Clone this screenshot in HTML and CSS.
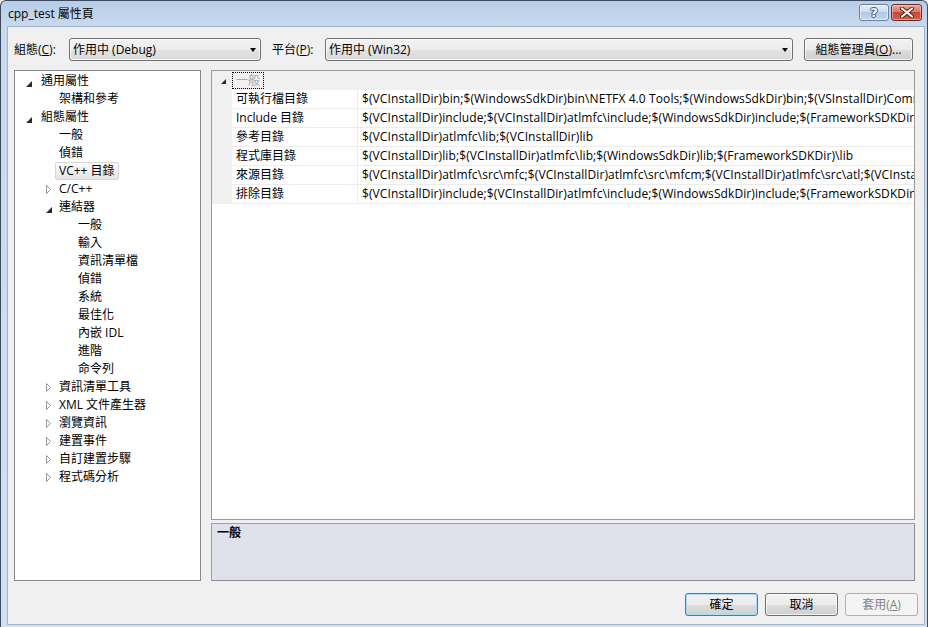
FILE: index.html
```html
<!DOCTYPE html>
<html>
<head>
<meta charset="utf-8">
<title>cpp_test 屬性頁</title>
<link rel="stylesheet" href="styles.css">
</head>
<body>
<div class="window">
  <div class="titlebar">
    <span class="title">cpp_test 屬性頁</span>
    <div class="caps">
      <div class="cap help"><span>?</span></div>
      <div class="cap close">
        <svg width="14" height="11" viewBox="0 0 14 11"><path d="M2 1.5 L12 9.5 M12 1.5 L2 9.5" stroke="#5a1a12" stroke-width="4" stroke-linecap="round"/><path d="M2 1.5 L12 9.5 M12 1.5 L2 9.5" stroke="#fff" stroke-width="2.2" stroke-linecap="round"/></svg>
      </div>
    </div>
  </div>
  <div class="client">
    <div class="toprow">
      <span class="lbl lbl1">組態(<u>C</u>):</span>
      <div class="combo combo1"><span>作用中 (Debug)</span><i class="drop"></i></div>
      <span class="lbl lbl2">平台(<u>P</u>):</span>
      <div class="combo combo2"><span>作用中 (Win32)</span><i class="drop"></i></div>
      <div class="btn cfg">組態管理員(<u>O</u>)...</div>
    </div>
    <div class="panels">
      <div class="tree">
        <div class="row l0"><i class="slot"><i class="exp"></i></i><span>通用屬性</span></div>
        <div class="row l1"><i class="slot"></i><span>架構和參考</span></div>
        <div class="row l0"><i class="slot"><i class="exp"></i></i><span>組態屬性</span></div>
        <div class="row l1"><i class="slot"></i><span>一般</span></div>
        <div class="row l1"><i class="slot"></i><span>偵錯</span></div>
        <div class="row l1"><i class="slot"></i><span class="sel">VC++ 目錄</span></div>
        <div class="row l1"><i class="slot"><i class="col"></i></i><span>C/C++</span></div>
        <div class="row l1"><i class="slot"><i class="exp"></i></i><span>連結器</span></div>
        <div class="row l2"><span>一般</span></div>
        <div class="row l2"><span>輸入</span></div>
        <div class="row l2"><span>資訊清單檔</span></div>
        <div class="row l2"><span>偵錯</span></div>
        <div class="row l2"><span>系統</span></div>
        <div class="row l2"><span>最佳化</span></div>
        <div class="row l2"><span>內嵌 IDL</span></div>
        <div class="row l2"><span>進階</span></div>
        <div class="row l2"><span>命令列</span></div>
        <div class="row l1"><i class="slot"><i class="col"></i></i><span>資訊清單工具</span></div>
        <div class="row l1"><i class="slot"><i class="col"></i></i><span>XML 文件產生器</span></div>
        <div class="row l1"><i class="slot"><i class="col"></i></i><span>瀏覽資訊</span></div>
        <div class="row l1"><i class="slot"><i class="col"></i></i><span>建置事件</span></div>
        <div class="row l1"><i class="slot"><i class="col"></i></i><span>自訂建置步驟</span></div>
        <div class="row l1"><i class="slot"><i class="col"></i></i><span>程式碼分析</span></div>
      </div>
      <div class="right">
        <div class="grid">
          <div class="ghead">
            <i class="gslot"><i class="exp"></i></i>
            <span class="cat">一般</span>
          </div>
          <div class="prow"><i class="gut"></i><span class="name">可執行檔目錄</span><span class="val">$(VCInstallDir)bin;$(WindowsSdkDir)bin\NETFX 4.0 Tools;$(WindowsSdkDir)bin;$(VSInstallDir)Common7\Tools\bin;$(VSInstallDir)Common7\tools</span></div>
          <div class="prow"><i class="gut"></i><span class="name">Include 目錄</span><span class="val">$(VCInstallDir)include;$(VCInstallDir)atlmfc\include;$(WindowsSdkDir)include;$(FrameworkSDKDir)\include</span></div>
          <div class="prow"><i class="gut"></i><span class="name">參考目錄</span><span class="val">$(VCInstallDir)atlmfc\lib;$(VCInstallDir)lib</span></div>
          <div class="prow"><i class="gut"></i><span class="name">程式庫目錄</span><span class="val">$(VCInstallDir)lib;$(VCInstallDir)atlmfc\lib;$(WindowsSdkDir)lib;$(FrameworkSDKDir)\lib</span></div>
          <div class="prow"><i class="gut"></i><span class="name">來源目錄</span><span class="val">$(VCInstallDir)atlmfc\src\mfc;$(VCInstallDir)atlmfc\src\mfcm;$(VCInstallDir)atlmfc\src\atl;$(VCInstallDir)crt\src</span></div>
          <div class="prow"><i class="gut"></i><span class="name">排除目錄</span><span class="val">$(VCInstallDir)include;$(VCInstallDir)atlmfc\include;$(WindowsSdkDir)include;$(FrameworkSDKDir)\include</span></div>
        </div>
        <div class="desc"><b>一般</b></div>
      </div>
    </div>
    <div class="bottom">
      <div class="btn def">確定</div>
      <div class="btn">取消</div>
      <div class="btn dis">套用(<u>A</u>)</div>
    </div>
  </div>
</div>
</body>
</html>
```

FILE: styles.css
```css
* { box-sizing: border-box; margin: 0; padding: 0; }
html, body { width: 928px; height: 627px; overflow: hidden; }
body {
  font-family: "Open Sans", "Noto Sans CJK TC", sans-serif;
  font-size: 12px;
  color: #000;
  background: #fff;
}
i { font-style: normal; display: block; }
u { text-decoration: underline; text-underline-offset: 1px; }

.window {
  width: 928px;
  height: 627px;
  border: 1px solid #3b4a5e;
  border-bottom: none;
  border-radius: 6px 6px 0 0;
  background: linear-gradient(#b9cde7 0px, #c9d9ee 25px, #d2e0f1 100%);
  padding: 0 2px 2px 6px;
  display: flex;
  flex-direction: column;
}

.titlebar {
  height: 25px;
  display: flex;
  align-items: flex-start;
  justify-content: space-between;
  flex-shrink: 0;
}
.title {
  padding-left: 1px;
  line-height: 25px;
  font-size: 12px;
  color: #000;
}
.caps {
  display: flex;
  gap: 2px;
  margin-top: 3px;
  margin-right: 3px;
}
.cap {
  height: 17px;
  border-radius: 3px;
  display: flex;
  align-items: center;
  justify-content: center;
}
.help {
  width: 30px;
  border: 1px solid #6f8098;
  background: linear-gradient(#e4ecf6 0%, #cedcee 45%, #b4c8e2 50%, #c5d6ec 100%);
  box-shadow: inset 0 0 0 1px rgba(255,255,255,0.55);
}
.help span {
  font-family: "DejaVu Sans", sans-serif;
  font-weight: bold;
  font-size: 13px;
  line-height: 15px;
  color: #fff;
  text-shadow: 0 0 1px #2f4260, 1px 0 0 #4a5d7a, -1px 0 0 #4a5d7a, 0 1px 0 #4a5d7a, 0 -1px 0 #4a5d7a;
}
.close {
  width: 31px;
  border: 1px solid #6b2b22;
  background: linear-gradient(#e8a799 0%, #d77a66 45%, #c44a34 50%, #d0604a 100%);
  box-shadow: inset 0 0 0 1px rgba(255,220,210,0.5);
}

.client {
  height: 599px;
  width: 918px;
  background: #f0f0f0;
  border: 1px solid #a2b4cb;
  display: flex;
  flex-direction: column;
  padding: 11px 6px 0 6px;
}

.toprow {
  height: 23px;
  display: flex;
  align-items: center;
  flex-shrink: 0;
}
.lbl { line-height: 23px; white-space: nowrap; }
.lbl1 { width: 55px; }
.lbl2 { width: 53px; margin-left: 11px; }
.combo {
  height: 23px;
  border: 1px solid #707070;
  border-radius: 3px;
  background: linear-gradient(#f3f3f3 0%, #ececec 50%, #e2e2e2 51%, #dadada 100%);
  box-shadow: inset 0 0 0 1px rgba(255,255,255,0.7);
  display: flex;
  align-items: center;
  justify-content: space-between;
  padding: 0 4px 0 3px;
  line-height: 21px;
  white-space: nowrap;
}
.combo1 { width: 192px; }
.combo2 { width: 468px; }
.drop {
  width: 0;
  height: 0;
  border-left: 3.5px solid transparent;
  border-right: 3.5px solid transparent;
  border-top: 4px solid #000;
  margin-top: 1px;
}

.btn {
  height: 23px;
  border: 1px solid #707070;
  border-radius: 3px;
  background: linear-gradient(#f2f2f2 0%, #ebebeb 50%, #dddddd 51%, #cfcfcf 100%);
  box-shadow: inset 0 0 0 1px rgba(255,255,255,0.75);
  display: flex;
  align-items: center;
  justify-content: center;
  line-height: 21px;
  white-space: nowrap;
}
.cfg { width: 109px; margin-left: 11px; }

.panels {
  margin-top: 9px;
  height: 511px;
  display: flex;
  gap: 10px;
  flex-shrink: 0;
}

.tree {
  width: 187px;
  height: 511px;
  background: #fff;
  border: 1px solid #828790;
  padding-top: 1px;
  overflow: hidden;
}
.row {
  height: 18px;
  line-height: 18px;
  display: flex;
  align-items: center;
  white-space: nowrap;
}
.l0 { padding-left: 11px; }
.l0 .slot { width: 15px; }
.l1 { padding-left: 31px; }
.l1 .slot { width: 13px; }
.l2 { padding-left: 63px; }
.slot { height: 18px; position: relative; flex-shrink: 0; }
.exp {
  position: absolute;
  left: 0;
  top: 9px;
  width: 0;
  height: 0;
  border-left: 6px solid transparent;
  border-bottom: 6px solid #2b2b2b;
}
.col {
  position: absolute;
  left: 0;
  top: 5px;
  width: 6px;
  height: 9px;
  background: url("data:image/svg+xml;utf8,<svg xmlns='http://www.w3.org/2000/svg' width='6' height='9'><path d='M0.5 0.5 L4.5 4.5 L0.5 8.5 Z' fill='white' stroke='%23989898'/></svg>") no-repeat;
}
.sel {
  margin-left: -4px;
  padding: 0 3px;
  border: 1px solid #d6d6d6;
  border-radius: 2px;
  background: linear-gradient(#fbfbfb, #e6e6e6);
  line-height: 16px;
}

.right {
  width: 704px;
  display: flex;
  flex-direction: column;
}
.grid {
  height: 450px;
  border: 1px solid #9a9a9a;
  background: #fff;
  overflow: hidden;
}
.ghead {
  height: 19px;
  background: #f0f0f0;
  display: flex;
  align-items: center;
}
.gslot { width: 20px; height: 19px; position: relative; }
.gslot .exp { left: 9px; top: 8px; border-left-width: 5px; border-bottom-width: 5px; }
.cat {
  height: 17px;
  line-height: 15px;
  padding: 0 3px;
  border: 1px dotted #000;
  color: #a3abb8;
}
.prow {
  height: 19px;
  display: flex;
  white-space: nowrap;
}
.gut { width: 20px; height: 19px; background: #f0f0f0; flex-shrink: 0; }
.name {
  width: 126px;
  flex-shrink: 0;
  padding-left: 4px;
  line-height: 18px;
  border-bottom: 1px solid #ececec;
  border-right: 1px solid #ececec;
}
.val {
  flex: 1;
  overflow: hidden;
  padding-left: 4px;
  line-height: 18px;
  border-bottom: 1px solid #ececec;
  font-size: 12px;
  letter-spacing: 0.1px;
}
.desc {
  margin-top: 3px;
  height: 58px;
  border: 1px solid #a0a0a0;
  border-right-color: #8a8a8a;
  border-bottom-color: #8a8a8a;
  background: #dfe2ea;
  padding-left: 5px;
  line-height: 18px;
}
.desc b { font-weight: bold; }

.bottom {
  margin-top: 12px;
  height: 23px;
  display: flex;
  justify-content: flex-end;
  gap: 7px;
}
.bottom .btn { width: 73px; }
.btn.def {
  border-color: #3c7fb1;
  box-shadow: inset 0 0 0 1px #a9dcf6;
}
.btn.dis {
  border-color: #adb2b5;
  background: #f4f4f4;
  box-shadow: none;
  color: #838383;
}
```
